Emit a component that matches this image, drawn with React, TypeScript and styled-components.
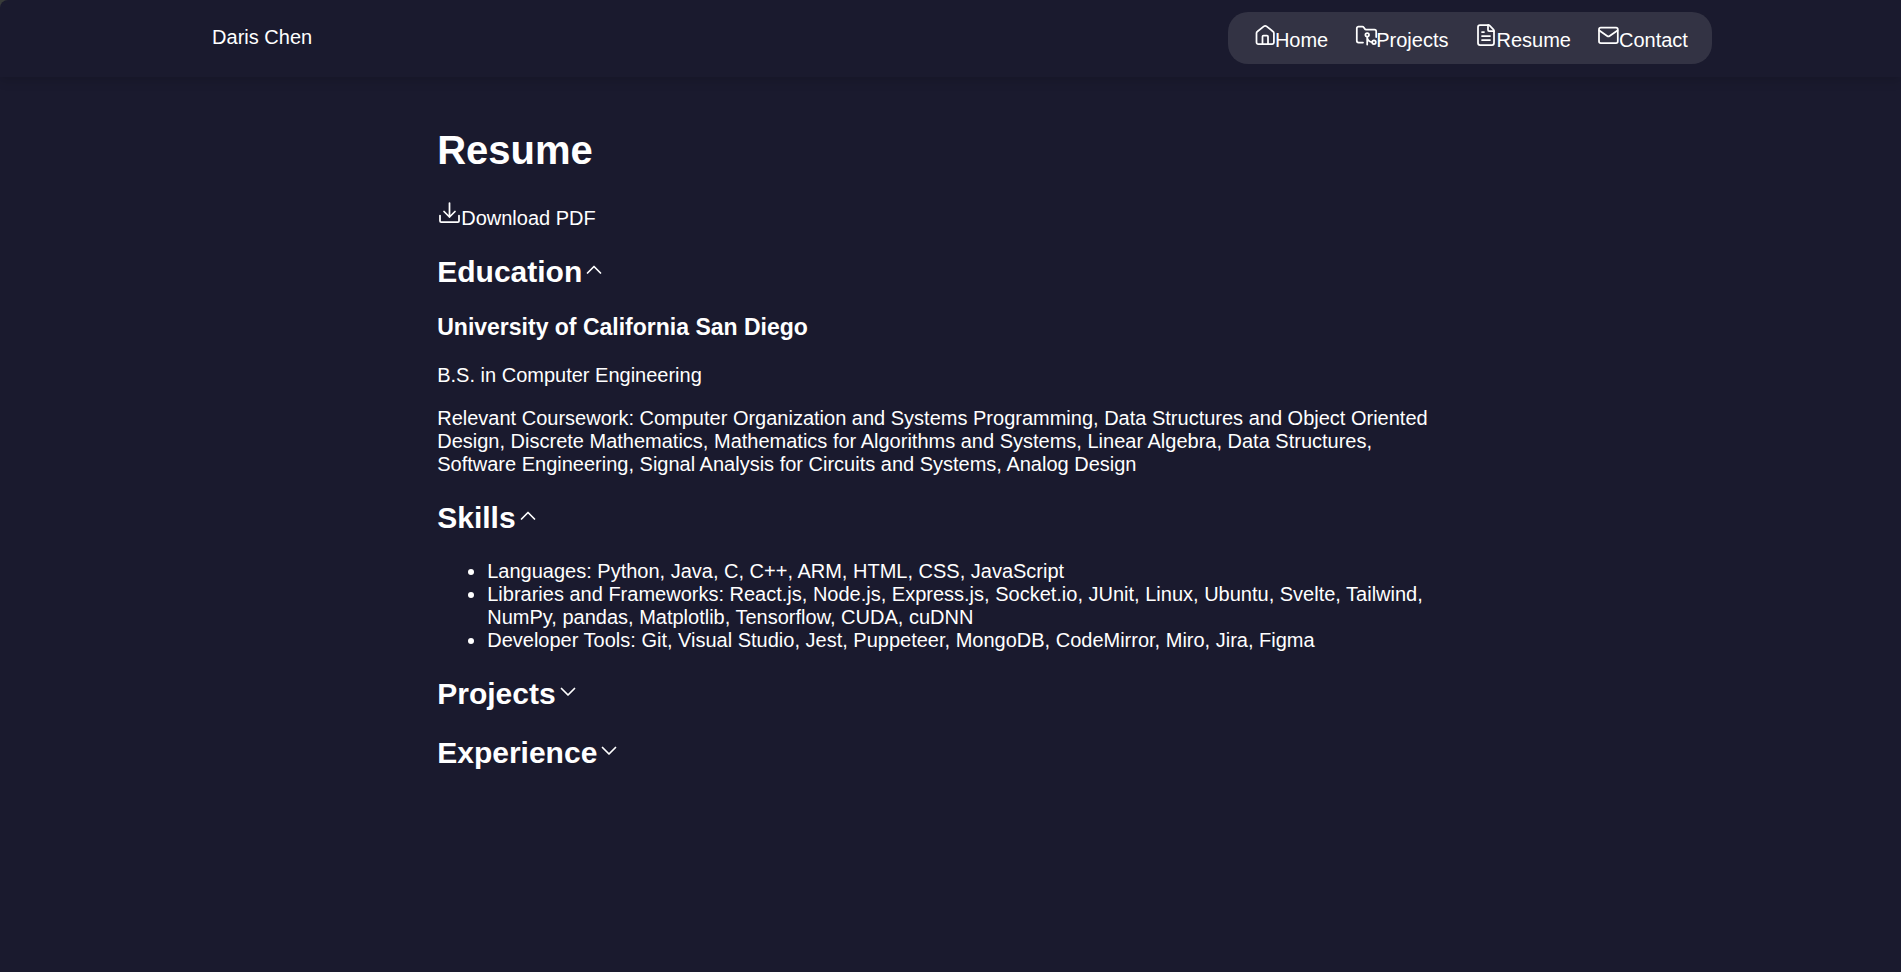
import React, { useState } from "react";
import styled, { createGlobalStyle } from "styled-components";
import { FileText } from "lucide-react";

const GlobalStyle = createGlobalStyle`
  html {
    background: #383b39;
  }
  body {
    margin: 0;
    font-family: "Liberation Sans", Arial, sans-serif;
    font-size: 20px;
    line-height: 23px;
    color: #fff;
  }
`;

const Page = styled.div`
  min-height: 100vh;
  background: #1a1a2e;
  border-top-left-radius: 8px;
`;

const Header = styled.header`
  display: flex;
  justify-content: space-between;
  align-items: center;
  padding: 12px calc(10% - 1px) 13px 10%;
  box-shadow: 0 4px 10px rgba(0, 0, 0, 0.14);
`;

const Brand = styled.a`
  padding: 0 0 2px 22px;
  color: inherit;
  text-decoration: none;
`;

const IconLink = styled.a`
  color: inherit;
  text-decoration: none;
`;

const Nav = styled.nav`
  display: flex;
  gap: 26px;
  padding: 11px 24px 12px 25px;
  border-radius: 20px;
  background: #333344;

  svg {
    margin-right: -2px;
  }
`;

const Main = styled.main`
  padding: 50px 24% 50px 23%;
`;

const Title = styled.h1`
  margin: 0 0 28px;
  font-size: 40px;
  line-height: 46px;
`;

const SectionTitle = styled.h2`
  margin: 25px 0;
  font-size: 30px;
  line-height: 34px;
`;

const Toggle = styled.button`
  display: block;
  padding: 0;
  border: 0;
  background: none;
  color: inherit;
  font: inherit;
  cursor: pointer;
`;

const School = styled.h3`
  margin: 24px 0;
  font-size: 23px;
  line-height: 26px;
`;

const Text = styled.p`
  margin: 20px 0;
`;

const List = styled.ul`
  margin: 20px 0;
  padding-left: 50px;
`;

const Stroke = styled.svg.attrs({
  width: 24,
  height: 24,
  viewBox: "0 0 24 24",
  fill: "none",
  stroke: "currentColor",
  strokeWidth: 1.75,
  strokeLinecap: "round",
  strokeLinejoin: "round",
  "aria-hidden": true,
})``;

function HomeIcon() {
  return (
    <Stroke>
      <path d="M3.5 10.3c0-.7.3-1.4.9-1.8l6.4-5.1a2.2 2.2 0 0 1 2.8 0L20 8.500c.6.400.9 1.100.9 1.800v9a1.800 1.800 0 0 1-1.800 1.800H5.300a1.800 1.800 0 0 1-1.800-1.800z" />
      <path d="M9.500 21v-7.500a1 1 0 0 1 1-1h3.500a1 1 0 0 1 1 1V21" />
    </Stroke>
  );
}

function ProjectsIcon() {
  return (
    <Stroke>
      <path d="M9 19.500H4.500A1.700 1.700 0 0 1 2.800 17.800V5.200a1.700 1.700 0 0 1 1.700-1.700h3.800c.600 0 1.100.300 1.400.800l1 1.400c.300.500.800.800 1.400.800h8.400a1.700 1.700 0 0 1 1.700 1.700V14" />
      <circle cx="13.200" cy="11.800" r="1.800" />
      <circle cx="20" cy="19.200" r="1.800" />
      <path d="M18.200 19.200c-2.800 0-5-2.300-5-5v7.300" />
    </Stroke>
  );
}

function ContactIcon() {
  return (
    <Stroke>
      <rect x="2" y="4.500" width="18.800" height="15.500" rx="1.800" />
      <path d="m2.300 7.500 7.900 5.500a2.100 2.100 0 0 0 2.400 0l7.900-5.500" />
    </Stroke>
  );
}

function DownloadIcon() {
  return (
    <Stroke>
      <path d="M12.500 2v14M7 10.500l5.500 5.500 5.500-5.500" />
      <path d="M3 14.500V20a1.200 1.200 0 0 0 1.200 1.200h16.600A1.200 1.200 0 0 0 22 20v-5.500" />
    </Stroke>
  );
}

function Chevron({ up }: { up: boolean }) {
  return (
    <Stroke>
      <path d={up ? "M5.500 15 12 8.500l6.500 6.500" : "M5.500 8.500 12 15l6.500-6.500"} />
    </Stroke>
  );
}

type SectionProps = { title: string; initiallyOpen?: boolean; children?: React.ReactNode };

function Section({ title, initiallyOpen = false, children }: SectionProps) {
  const [open, setOpen] = useState(initiallyOpen);
  return (
    <section>
      <SectionTitle>
        <Toggle type="button" aria-expanded={open} onClick={() => setOpen(!open)}>
          {title}
          <Chevron up={open} />
        </Toggle>
      </SectionTitle>
      {open && children}
    </section>
  );
}

const links = [
  { label: "Home", icon: <HomeIcon /> },
  { label: "Projects", icon: <ProjectsIcon /> },
  { label: "Resume", icon: <FileText size={24} strokeWidth={1.75} aria-hidden /> },
  { label: "Contact", icon: <ContactIcon /> },
];

export default function App() {
  return (
    <Page>
      <GlobalStyle />
      <Header>
        <Brand href="#home">Daris Chen</Brand>
        <Nav>
          {links.map(({ label, icon }) => (
            <IconLink key={label} href={`#${label.toLowerCase()}`}>
              {icon}
              {label}
            </IconLink>
          ))}
        </Nav>
      </Header>
      <Main>
        <Title>Resume</Title>
        <IconLink href="#resume-pdf">
          <DownloadIcon />
          Download PDF
        </IconLink>
        <Section title="Education" initiallyOpen>
          <School>University of California San Diego</School>
          <Text>B.S. in Computer Engineering</Text>
          <Text>
            Relevant Coursework: Computer Organization and Systems Programming, Data Structures and
            Object Oriented Design, Discrete Mathematics, Mathematics for Algorithms and Systems,
            Linear Algebra, Data Structures, Software Engineering, Signal Analysis for Circuits and
            Systems, Analog Design
          </Text>
        </Section>
        <Section title="Skills" initiallyOpen>
          <List>
            <li>Languages: Python, Java, C, C++, ARM, HTML, CSS, JavaScript</li>
            <li>
              Libraries and Frameworks: React.js, Node.js, Express.js, Socket.io, JUnit, Linux,
              Ubuntu, Svelte, Tailwind, NumPy, pandas, Matplotlib, Tensorflow, CUDA, cuDNN
            </li>
            <li>
              Developer Tools: Git, Visual Studio, Jest, Puppeteer, MongoDB, CodeMirror, Miro, Jira,
              Figma
            </li>
          </List>
        </Section>
        <Section title="Projects" />
        <Section title="Experience" />
      </Main>
    </Page>
  );
}
